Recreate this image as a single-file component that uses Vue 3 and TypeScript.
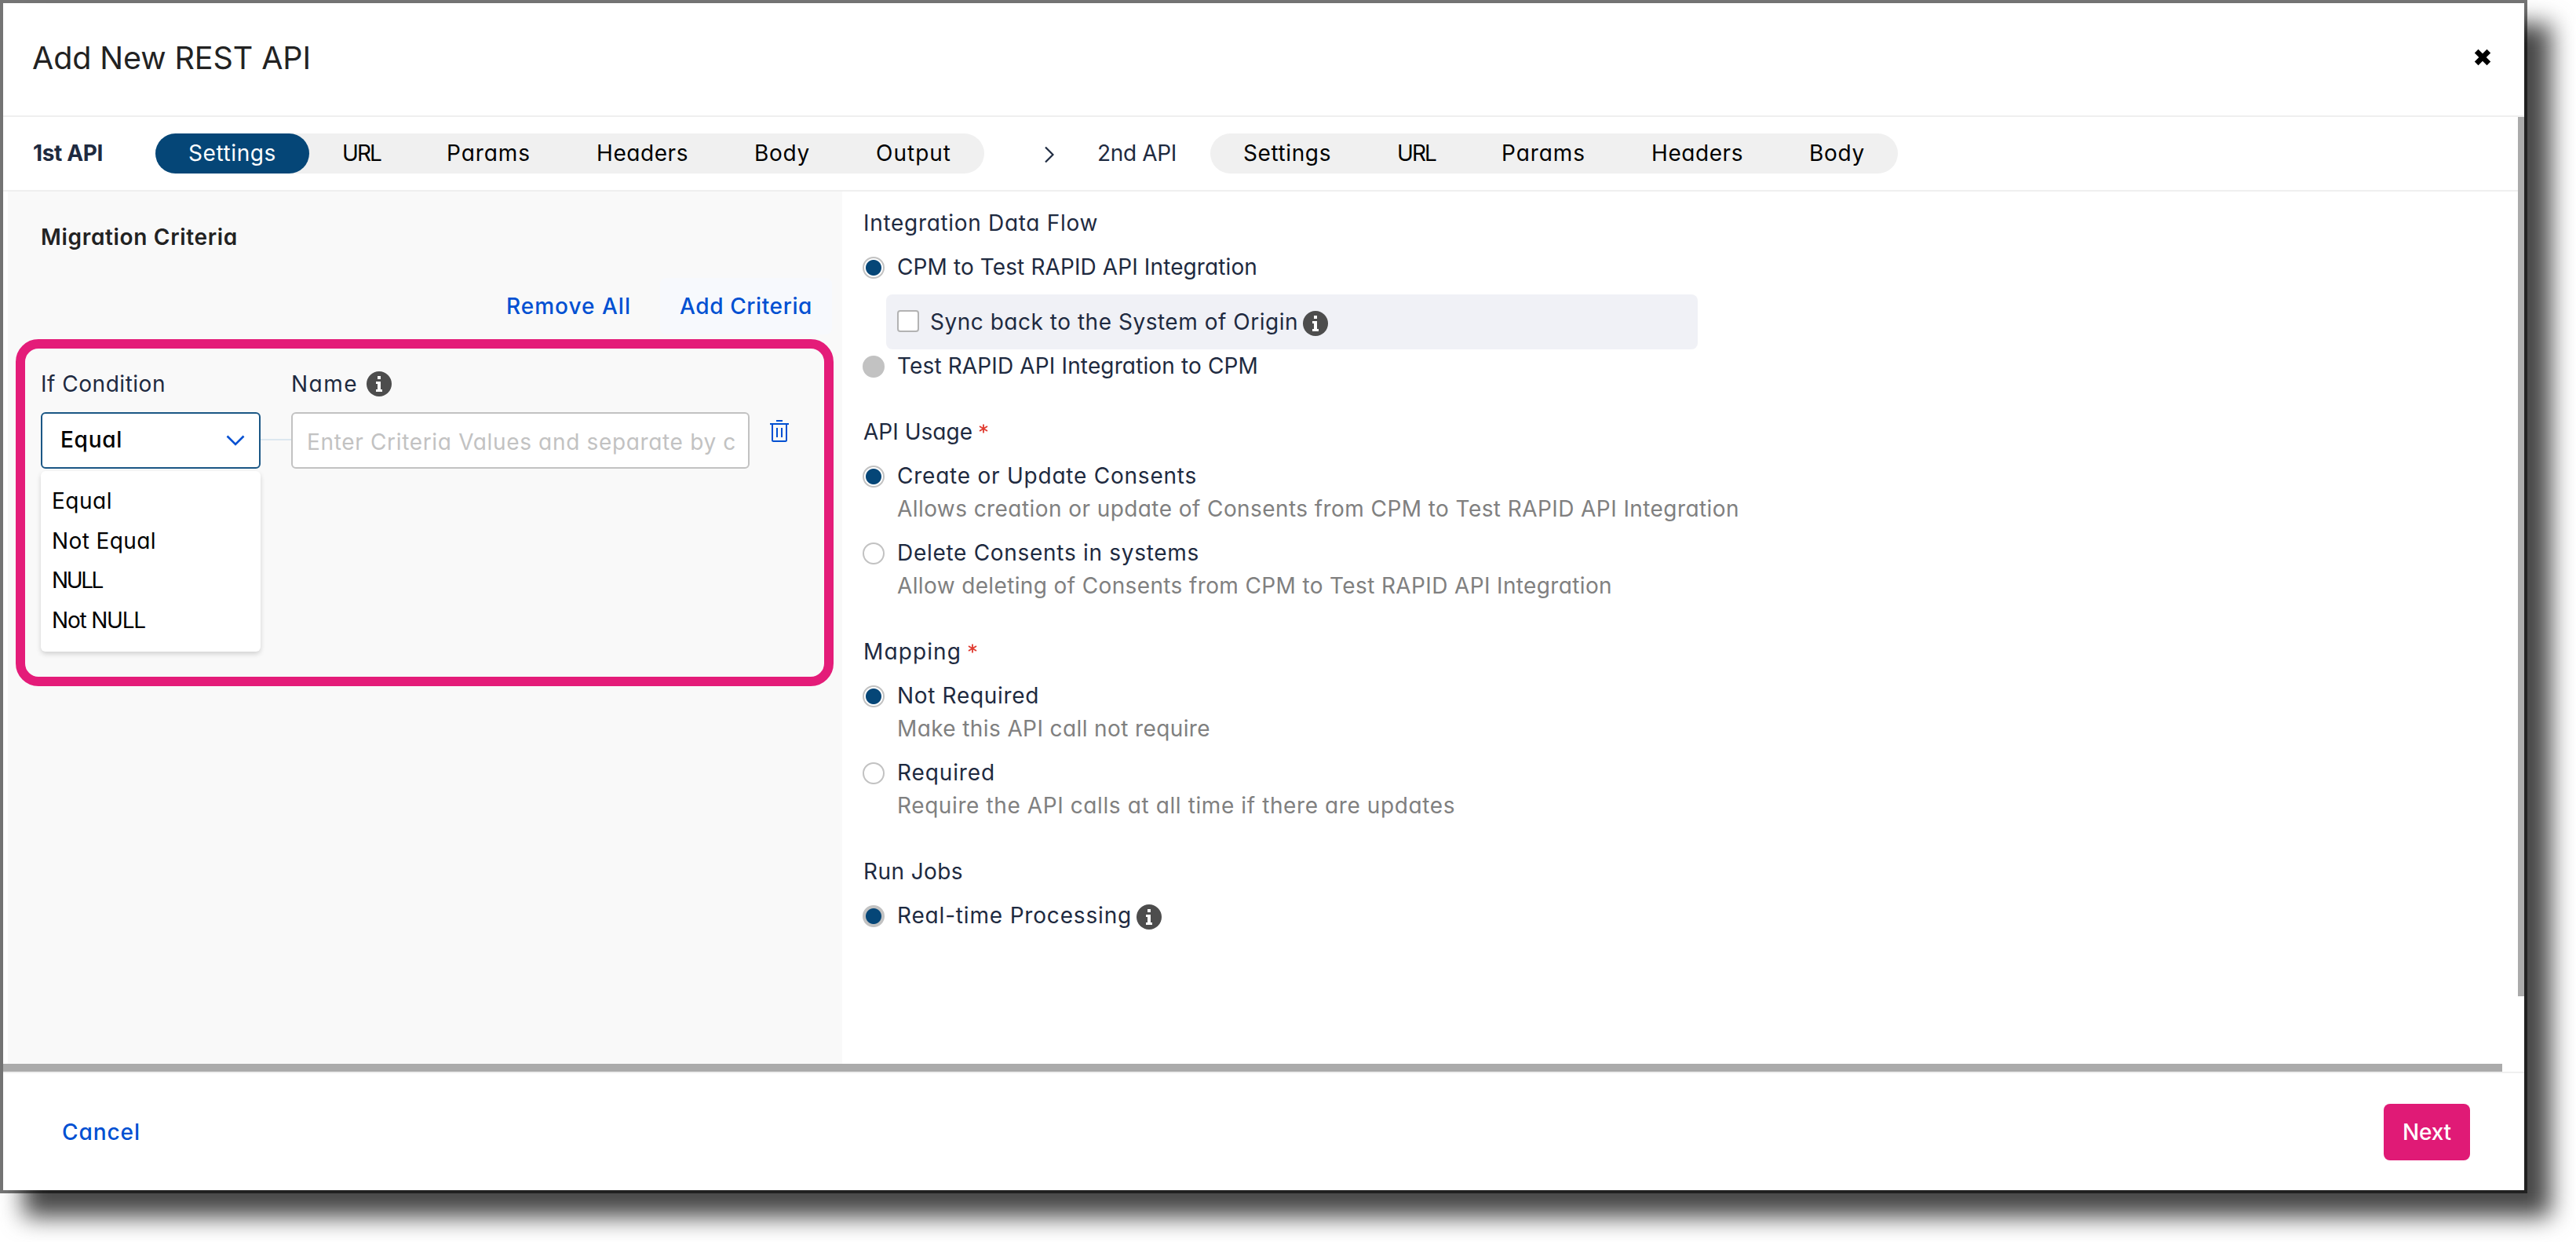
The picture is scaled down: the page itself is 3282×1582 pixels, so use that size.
<script setup lang="ts">
import type { Directive } from 'vue'

interface Label { text: string; width: number }
interface Option extends Label {
  kind: 'on' | 'off' | 'disabled' | 'locked'
  desc?: Label
  sync?: Label
  info?: boolean
}
interface Group extends Label { required?: boolean; options: Option[] }

// Spreads the letters of a label so that it takes the given width.
const fit = (el: HTMLElement, width: number) => {
  el.style.letterSpacing = '0px'
  const natural = el.getBoundingClientRect().width
  const count = (el.textContent ?? '').length
  el.style.letterSpacing = `${((width - natural) / count).toFixed(3)}px`
}
const vTrack: Directive<HTMLElement, number> = {
  mounted: (el, binding) => fit(el, binding.value),
}

const firstTabs: Label[] = [
  { text: 'Settings', width: 112 },
  { text: 'URL', width: 49 },
  { text: 'Params', width: 107 },
  { text: 'Headers', width: 117 },
  { text: 'Body', width: 71 },
  { text: 'Output', width: 96 },
]
const secondTabs: Label[] = firstTabs.slice(0, 5)

const conditions: Label[] = [
  { text: 'Equal', width: 77 },
  { text: 'Not Equal', width: 133 },
  { text: 'NULL', width: 64 },
  { text: 'Not NULL', width: 119 },
]

const groups: Group[] = [
  {
    text: 'Integration Data Flow', width: 299,
    options: [
      { text: 'CPM to Test RAPID API Integration', width: 459, kind: 'on', sync: { text: 'Sync back to the System of Origin', width: 469 } },
      { text: 'Test RAPID API Integration to CPM', width: 460, kind: 'disabled' },
    ],
  },
  {
    text: 'API Usage', width: 139, required: true,
    options: [
      { text: 'Create or Update Consents', width: 382, kind: 'on', desc: { text: 'Allows creation or update of Consents from CPM to Test RAPID API Integration', width: 1073 } },
      { text: 'Delete Consents in systems', width: 385, kind: 'off', desc: { text: 'Allow deleting of Consents from CPM to Test RAPID API Integration', width: 911 } },
    ],
  },
  {
    text: 'Mapping', width: 125, required: true,
    options: [
      { text: 'Not Required', width: 181, kind: 'on', desc: { text: 'Make this API call not require', width: 399 } },
      { text: 'Required', width: 125, kind: 'off', desc: { text: 'Require the API calls at all time if there are updates', width: 711 } },
    ],
  },
  {
    text: 'Run Jobs', width: 127,
    options: [{ text: 'Real-time Processing', width: 299, kind: 'locked', info: true }],
  },
]
</script>

<template>
  <div class="stage">
    <div class="shade"></div>
    <div class="modal">
      <header class="head">
        <h1><span v-track="355">Add New REST API</span></h1>
        <svg class="close" viewBox="0 0 22 22" width="22" height="22">
          <path d="M5.5 0.8 11 6.3 16.500 .8 21.200 5.500 15.700 11 21.200 16.500 16.500 21.200 11 15.700 5.500 21.200 .8 16.500 6.300 11 .8 5.500Z" />
        </svg>
      </header>

      <div class="body">
        <div class="content">
          <nav class="steps">
            <div class="step first"><span v-track="89">1st API</span></div>
            <div class="pill">
              <div v-for="(t, i) in firstTabs" :key="t.text" class="tab" :class="{ active: i === 0 }">
                <span v-track="t.width">{{ t.text }}</span>
              </div>
            </div>
            <svg class="next-step" viewBox="0 0 12 22" width="12" height="22"><path d="M1 1.500 10.500 11 1 20.500" /></svg>
            <div class="step second"><span v-track="101">2nd API</span></div>
            <div class="pill">
              <div v-for="t in secondTabs" :key="t.text" class="tab"><span v-track="t.width">{{ t.text }}</span></div>
            </div>
          </nav>

          <div class="columns">
            <section class="criteria">
              <h2><span v-track="251">Migration Criteria</span></h2>
              <div class="actions">
                <button class="link remove"><span v-track="159">Remove All</span></button>
                <button class="link add"><span v-track="169">Add Criteria</span></button>
              </div>
              <div class="callout">
                <div class="labels">
                  <div class="label cond"><span v-track="159">If Condition</span></div>
                  <div class="label"><span v-track="85">Name</span></div>
                  <svg class="info" viewBox="0 0 32 32" width="32" height="32">
                    <circle cx="16" cy="16" r="16" /><path d="M14 6h4v4h-4zM12 13h6v10h2v3h-8v-3h2v-7h-2z" />
                  </svg>
                </div>
                <div class="fields">
                  <div class="select">
                    <span v-track="79">Equal</span>
                    <svg viewBox="0 0 24 14" width="24" height="14"><path d="M1.500 1.500 12 12 22.500 1.500" /></svg>
                    <ul class="menu">
                      <li v-for="c in conditions" :key="c.text"><span v-track="c.width">{{ c.text }}</span></li>
                    </ul>
                  </div>
                  <div class="joint"></div>
                  <div class="input"><span v-track="547">Enter Criteria Values and separate by c</span></div>
                  <svg class="trash" viewBox="0 0 24 28" width="24" height="28">
                    <path d="M8 1h8M0 5h24M3 5v20.500q0 1.500 1.500 1.500h15q1.500 0 1.500-1.500V5M9 10v12M15 10v12" />
                  </svg>
                </div>
              </div>
            </section>

            <section class="options">
              <div v-for="g in groups" :key="g.text" class="group">
                <h3>
                  <span v-track="g.width">{{ g.text }}</span>
                  <svg v-if="g.required" class="star" viewBox="0 0 12 12" width="12" height="12">
                    <path d="M6 0.500V11.500M1 3 11 9M11 3 1 9" />
                  </svg>
                </h3>
                <div v-for="o in g.options" :key="o.text" class="option">
                  <div class="choice">
                    <i class="radio" :class="o.kind"></i>
                    <span v-track="o.width">{{ o.text }}</span>
                    <svg v-if="o.info" class="info" viewBox="0 0 32 32" width="32" height="32">
                      <circle cx="16" cy="16" r="16" /><path d="M14 6h4v4h-4zM12 13h6v10h2v3h-8v-3h2v-7h-2z" />
                    </svg>
                  </div>
                  <div v-if="o.desc" class="desc"><span v-track="o.desc.width">{{ o.desc.text }}</span></div>
                  <div v-if="o.sync" class="sync">
                    <i class="check"></i>
                    <span v-track="o.sync.width">{{ o.sync.text }}</span>
                    <svg class="info" viewBox="0 0 32 32" width="32" height="32">
                      <circle cx="16" cy="16" r="16" /><path d="M14 6h4v4h-4zM12 13h6v10h2v3h-8v-3h2v-7h-2z" />
                    </svg>
                  </div>
                </div>
              </div>
            </section>
          </div>
          <div class="hbar"></div>
        </div>
        <div class="vbar"></div>
      </div>

      <footer class="foot">
        <button class="link"><span v-track="100">Cancel</span></button>
        <button class="primary"><span v-track="62">Next</span></button>
      </footer>
    </div>
  </div>
</template>

<style>
body { margin: 0; background: #fff; overflow: hidden; }
</style>

<style scoped>
* { box-sizing: border-box; }
.stage {
  position: relative;
  width: 3282px;
  height: 1582px;
  overflow: hidden;
  font: 400 28px/42px "Inter", "Open Sans", sans-serif;
  font-feature-settings: "cv11";
  color: #1e2a40;
  white-space: nowrap;
}
.shade {
  position: absolute;
  left: 30px;
  top: 30px;
  width: 3220px;
  height: 1520px;
  background: #474747;
  filter: blur(15px);
}
.modal {
  position: relative;
  width: 3220px;
  height: 1520px;
  display: flex;
  flex-direction: column;
  border: 4px solid rgba(0, 0, 0, 0.54);
  background: #fff;
  background-clip: padding-box;
}
span { display: inline-block; }
h1, h2, h3, ul { margin: 0; padding: 0; list-style: none; font: inherit; }
button { border: 0; padding: 0; background: none; font: inherit; font-feature-settings: inherit; }
svg { display: block; flex: none; fill: none; }
.head {
  height: 145px;
  flex: none;
  display: flex;
  justify-content: space-between;
  padding: 44px 42px 0 37px;
  border-bottom: 2px solid #efefef;
}
.head h1 { font-size: 39.5px; line-height: 52px; color: #222; }
.close { fill: #000; margin-top: 14px; }
.body { height: 1216px; flex: none; display: flex; }
.content { flex: 1; display: flex; flex-direction: column; }
.vbar { width: 8px; height: 1120px; background: #ababab; }
.steps {
  height: 95px;
  flex: none;
  display: flex;
  align-items: flex-start;
  padding: 21px 0 0 38px;
  border-bottom: 2px solid #efefef;
}
.step { line-height: 51px; }
.first { width: 156px; font-weight: 700; }
.second { width: 144px; }
.next-step { margin: 16px 55px 0 77px; stroke: #1e2a40; stroke-width: 2.2; }
.pill { display: flex; height: 51px; border-radius: 26px; background: #f0f0f0; color: #000; }
.tab { padding: 0 42px; line-height: 51px; border-radius: 26px; }
.tab.active { background: #054677; color: #fff; }
.columns { display: flex; height: 1111px; padding-left: 6px; }
.criteria { width: 1063px; background: #f9f9f9; }
.criteria h2 { padding: 37px 0 0 42px; font-weight: 600; color: #222; }
.actions { display: flex; justify-content: flex-end; height: 72px; margin: 31px 13px 6px 0; line-height: 72px; }
.link { color: #0050d2; font-weight: 500; }
.remove { margin-right: 37px; }
.add { background: #f7f9fd; padding: 0 25px; border-radius: 8px; }
.callout {
  width: 1042px;
  height: 442px;
  margin-left: 10px;
  border: 12px solid #e41c79;
  border-radius: 29px;
  padding: 0 0 0 20px;
}
.labels { display: flex; height: 81px; padding-top: 24px; }
.label.cond { width: 319px; }
.labels .info { margin: 5px 0 0 11px; }
.info circle { fill: #4d4d4d; }
.info path { fill: #fff; }
.fields { display: flex; }
.select {
  position: relative;
  width: 280px;
  height: 72px;
  display: flex;
  justify-content: space-between;
  padding: 12px 18px 0 23px;
  border: 2px solid #1b5785;
  border-radius: 6px;
  background: #fff;
  color: #000;
  font-weight: 500;
}
.select svg { stroke: #0050d2; stroke-width: 2.6; margin-top: 15px; }
.menu {
  position: absolute;
  left: -2px;
  top: 73px;
  width: 280px;
  height: 230px;
  padding-top: 13px;
  border-radius: 6px;
  background: #fff;
  box-shadow: 0 3px 6px rgba(0, 0, 0, 0.16);
  font-weight: 400;
}
.menu li { height: 50.600px; line-height: 50.600px; padding-left: 14px; }
.joint { width: 39px; height: 2px; margin-top: 34px; background: #dce7f0; }
.input {
  width: 584px;
  height: 72px;
  padding: 15px 0 0 18px;
  border: 2px solid #c2c2c2;
  border-radius: 6px;
  background: #fff;
  color: #c2c2c2;
}
.trash { margin: 10px 0 0 26px; stroke: #0050d2; stroke-width: 2; }
.options { padding: 19px 0 0 26px; }
.group { margin-bottom: 42px; }
h3 { display: flex; height: 42px; margin-bottom: 14px; padding-left: 1px; }
.star { stroke: #e03a2f; stroke-width: 1.800; margin: 11px 0 0 8px; }
.option { margin-bottom: 14px; }
.choice { display: flex; height: 42px; }
.radio {
  width: 28px;
  height: 28px;
  margin: 8px 16px 0 0;
  border: 2px solid #c2c2c2;
  border-radius: 50%;
}
.radio.on { background: radial-gradient(circle, #054677 9.500px, #fff 10.500px); }
.radio.disabled { background: #c2c2c2; }
.radio.locked { background: radial-gradient(circle, #054677 9.500px, #c2c2c2 10.500px); }
.choice .info { margin: 7px 0 0 6px; }
.desc { padding-left: 44px; color: #808080; }
.sync {
  width: 1034px;
  height: 70px;
  margin: 14px 0 -14px 30px;
  padding: 14px 0 0 14px;
  display: flex;
  border-radius: 8px;
  background: #f0f1f6;
}
.check { width: 28px; height: 28px; margin: 6px 14px 0 0; border: 2px solid #b3b3b3; border-radius: 4px; background: #fff; }
.sync .info { margin: 7px 0 0 6px; }
.hbar { width: 3184px; height: 10px; flex: none; background: #ababab; }
.foot {
  flex: 1;
  display: flex;
  justify-content: space-between;
  align-items: flex-start;
  padding: 39px 69px 0 75px;
  border-top: 2px solid #efefef;
}
.foot button { height: 72px; line-height: 71px; }
.primary { width: 110px; border-radius: 8px; background: #e01a76; color: #fff; font-weight: 500; }
</style>
